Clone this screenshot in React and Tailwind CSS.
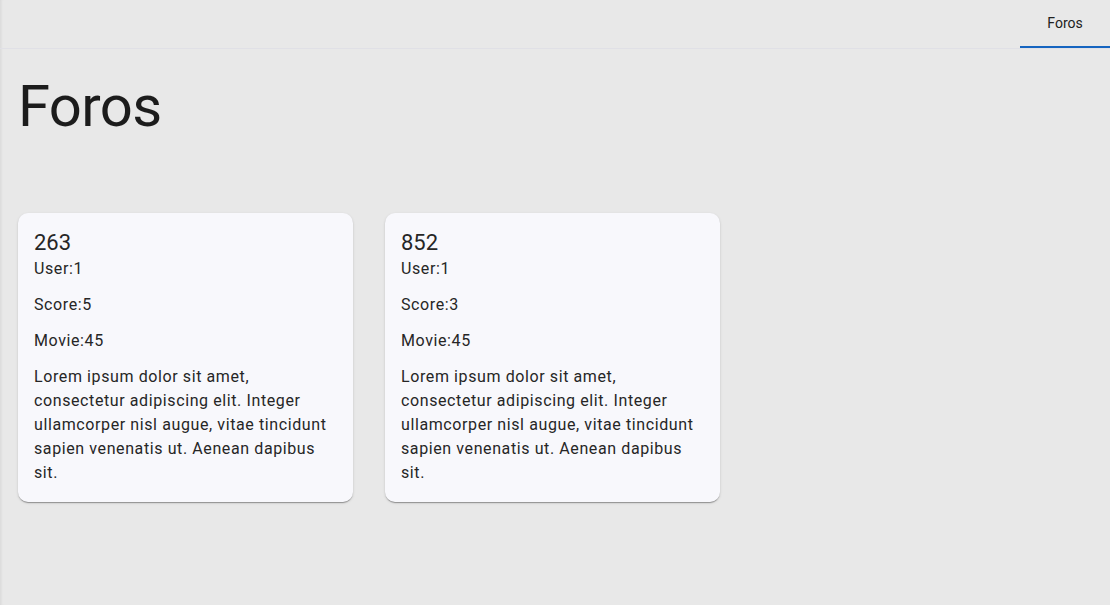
const forums = [
  { id: 263, user: 1, score: 5, movie: 45 },
  { id: 852, user: 1, score: 3, movie: 45 },
];

const lorem =
  'Lorem ipsum dolor sit amet, consectetur adipiscing elit. Integer ullamcorper nisl augue, vitae tincidunt sapien venenatis ut. Aenean dapibus sit.';

function ForumCard({ forum }) {
  return (
    <div className="w-[335px] rounded-[10px] bg-[#f8f8fc] px-4 pt-4 pb-[17px] text-[#262626] shadow-[0_2px_1px_-1px_rgba(0,0,0,0.2),0_1px_1px_0_rgba(0,0,0,0.14),0_1px_3px_0_rgba(0,0,0,0.12)]">
      <h5 className="text-[22px] leading-[28px]">{forum.id}</h5>
      <p className="mb-3 text-base leading-6 tracking-[0.6px]">User:{forum.user}</p>
      <p className="mb-3 text-base leading-6 tracking-[0.6px]">Score:{forum.score}</p>
      <p className="mb-3 text-base leading-6 tracking-[0.6px]">Movie:{forum.movie}</p>
      <p className="text-base leading-6 tracking-[0.6px]">{lorem}</p>
    </div>
  );
}

export default function App() {
  return (
    <div className="min-h-[605px] bg-[#e8e8e8] font-['Roboto',sans-serif] shadow-[inset_3px_0_3px_-2px_rgba(0,0,0,0.08)]">
      <header className="flex h-[49px] justify-end border-b border-[#e0e0e6]">
        <button className="relative flex h-12 w-[90px] items-center justify-center text-sm font-normal text-[#212121]">
          <span className="-mt-[2px]">Foros</span>
          <span className="absolute bottom-0 left-0 h-[2px] w-full bg-[#1565c0]" />
        </button>
      </header>
      <main className="px-[18px]">
        <h1 className="mt-[21px] text-[58px] font-normal leading-[72px] tracking-[-0.6px] text-[#1c1c1c]">Foros</h1>
        <div className="mt-[71px] flex gap-8">
          {forums.map((f) => (
            <ForumCard key={f.id} forum={f} />
          ))}
        </div>
      </main>
    </div>
  );
}
